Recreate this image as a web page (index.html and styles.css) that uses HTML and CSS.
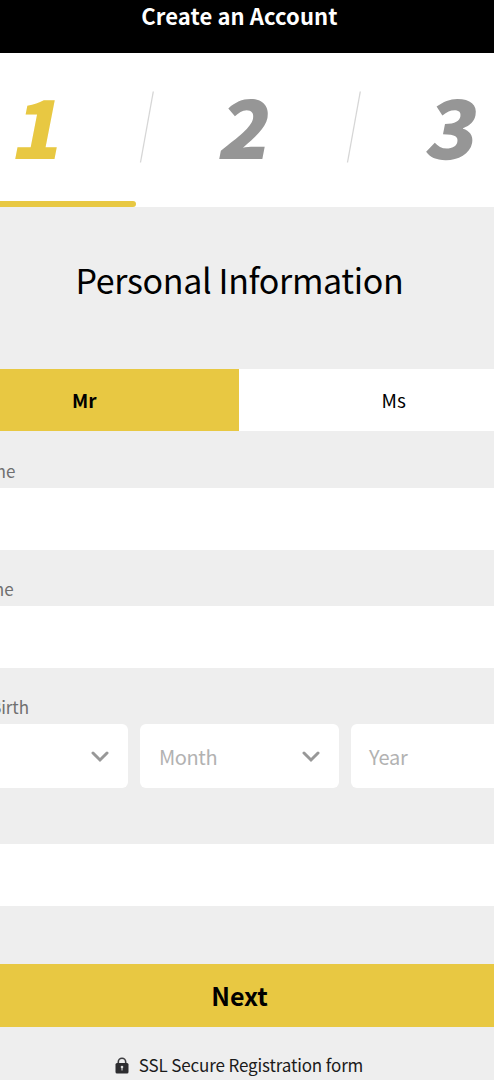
FILE: index.html
```
<!DOCTYPE html>
<html lang="en">
<head>
<meta charset="utf-8">
<title>Create an Account</title>
<link rel="stylesheet" href="styles.css">
</head>
<body>
<div class="page">
  <header class="topbar"><h1 class="topbar-title">Create an Account</h1></header>
  <nav class="steps">
    <div class="numbers">
      <span class="num active">1</span>
      <svg class="slash" width="16" height="74" viewBox="0 0 16 74"><path d="M14.3 1.5L1.5 72.5" stroke="#d6d6d6" stroke-width="1.3"/></svg>
      <span class="num">2</span>
      <svg class="slash" width="16" height="74" viewBox="0 0 16 74"><path d="M14.3 1.5L1.5 72.5" stroke="#d6d6d6" stroke-width="1.3"/></svg>
      <span class="num">3</span>
    </div>
    <div class="progress"></div>
  </nav>
  <main class="form">
    <h2 class="heading">Personal Information</h2>
    <div class="toggle"><div class="option selected">Mr</div><div class="option">Ms</div></div>
    <div class="label first">First Name</div>
    <div class="input"></div>
    <div class="label">Last Name</div>
    <div class="input"></div>
    <div class="label birth">Date of Birth</div>
    <div class="selects">
      <div class="select"><span>Day</span><svg width="18" height="12" viewBox="0 0 18 12"><path d="M2 2L9 9L16 2" fill="none" stroke="#989898" stroke-width="3" stroke-linecap="round"/></svg></div>
      <div class="select"><span>Month</span><svg width="18" height="12" viewBox="0 0 18 12"><path d="M2 2L9 9L16 2" fill="none" stroke="#989898" stroke-width="3" stroke-linecap="round"/></svg></div>
      <div class="select"><span>Year</span></div>
    </div>
    <div class="input email"></div>
    <div class="next">Next</div>
    <div class="secure">
      <svg width="14" height="17" viewBox="0 0 14 17"><path d="M3.3 7V4.9a3.7 3.7 0 0 1 7.4 0V7" fill="none" stroke="#3d3d40" stroke-width="1.6"/><rect x=".5" y="6" width="13" height="10.5" rx="1.5" fill="#2d2d30"/><circle cx="7" cy="10" r="1.3" fill="#ddd"/><path d="M7 10v3.5" stroke="#ddd" stroke-width="1"/></svg>
      <span>SSL Secure Registration form</span>
    </div>
  </main>
</div>
</body>
</html>
```
FILE: styles.css
```
* { box-sizing: border-box; }
body { margin: 0; overflow: hidden; background: #eee; font-family: "Noto Sans CJK SC", "Noto Sans", sans-serif; color: #000; }
.page { width: 621px; height: 1080px; margin-left: -71px; overflow: hidden; }
.topbar { height: 53px; background: #000; }
.topbar-title { margin: 0; color: #fff; font-size: 22px; line-height: 30px; font-weight: 700; text-align: center; letter-spacing: .1px; }
.steps { height: 154px; background: #fff; display: flex; flex-direction: column; justify-content: space-between; }
.numbers { display: flex; padding: 37px 0 0 79px; height: 148px; }
.num { flex: none; width: 66px; height: 68px; margin-right: 65px; font-size: 81px; line-height: 68px; font-weight: 900; text-align: center; color: #969696; transform: skewX(-11deg) scaleX(1.03); }
.num.active { color: #e8c842; }
.slash { flex: none; margin-right: 60px; }
.progress { width: 207px; height: 6px; background: #e8c842; border-radius: 0 3px 3px 0; }
.heading { margin: 0; padding-top: 48px; height: 162px; font-size: 34px; line-height: 50px; font-weight: 400; text-align: center; letter-spacing: -.36px; }
.toggle { display: flex; width: 619px; height: 62px; background: #fff; }
.option { width: 50%; padding-left: 1px; text-align: center; font-size: 19px; line-height: 62px; }
.selected { background: #e8c842; font-weight: 700; }
.label { height: 56px; padding: 26px 0 0 1px; font-size: 17px; line-height: 26px; color: #707070; }
.first { height: 57px; padding-top: 27px; }
.birth { padding-left: 2px; letter-spacing: -.1px; }
.input { height: 62px; background: #fff; }
.selects { display: flex; gap: 12px; }
.select { width: 199px; height: 64px; background: #fff; border-radius: 6px; padding: 2px 19.5px 0 19px; display: flex; align-items: center; justify-content: space-between; color: #b2b2b2; font-size: 20px; line-height: 62px; letter-spacing: -.4px; }
.select:last-child { padding-left: 18px; letter-spacing: -.2px; }
.email { margin-top: 56px; }
.next { margin-top: 58px; height: 63px; background: #e8c842; font-size: 25px; line-height: 63px; font-weight: 700; text-align: center; }
.secure { display: flex; justify-content: center; align-items: center; gap: 10px; padding: 24px 1px 0 0; font-size: 17px; line-height: 28px; color: #1b1b1b; letter-spacing: -.14px; }
```
